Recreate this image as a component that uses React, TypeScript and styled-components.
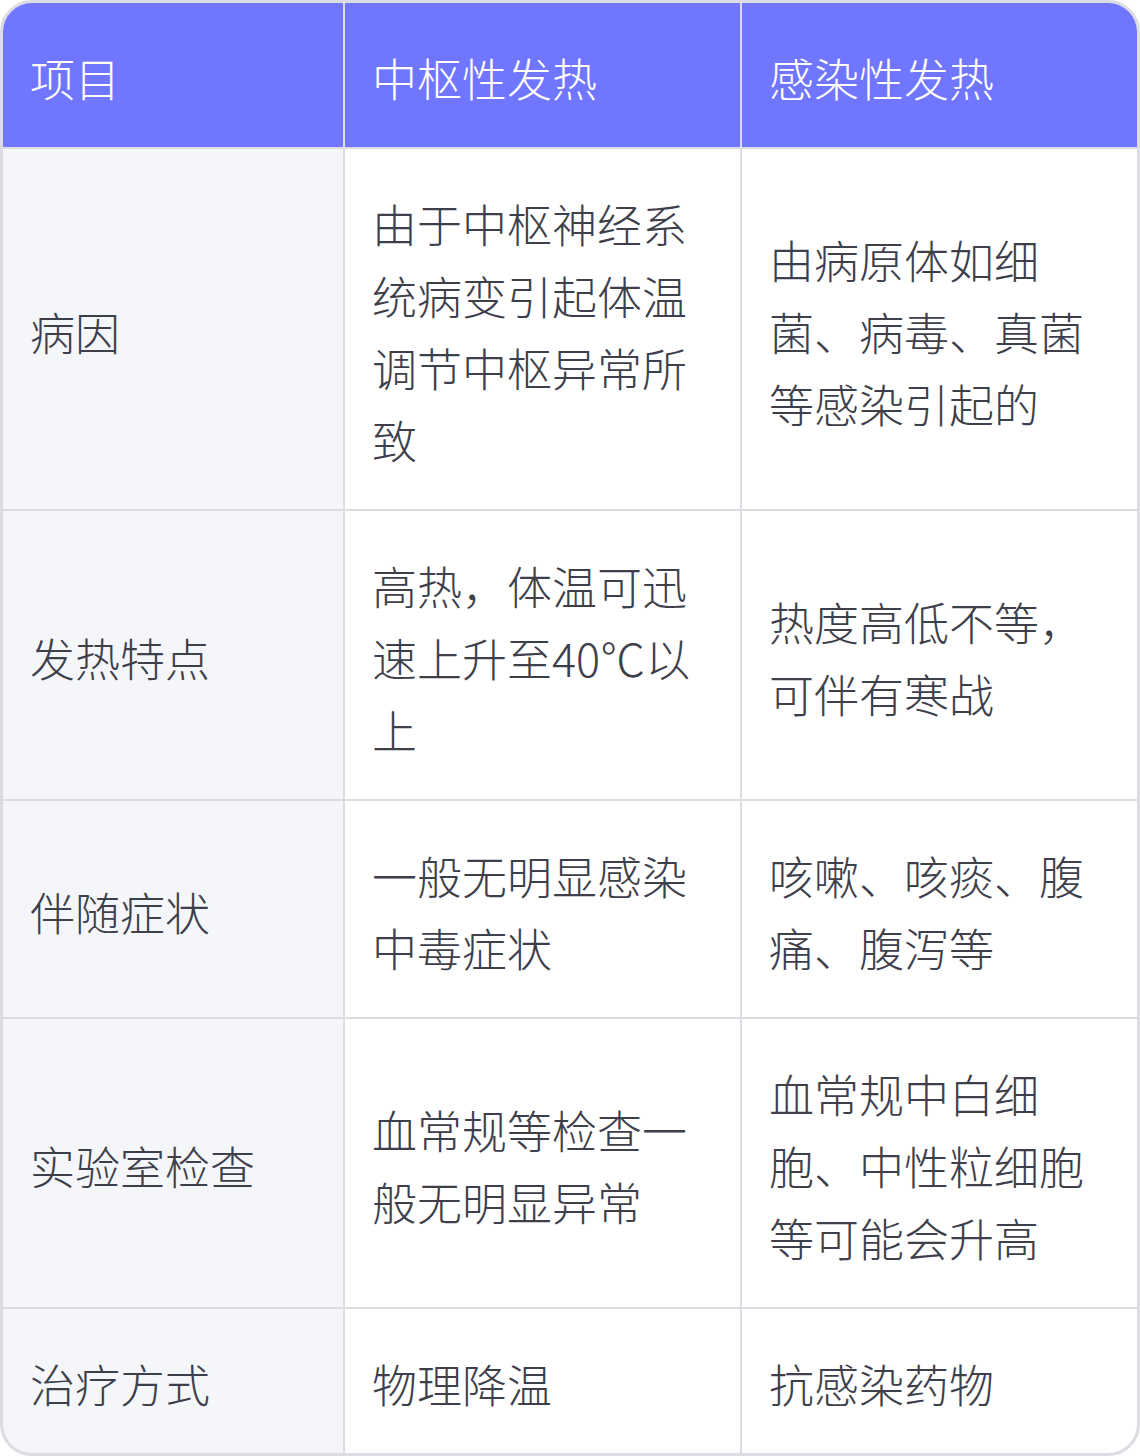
import React from "react";
import styled, { createGlobalStyle } from "styled-components";

const GlobalStyle = createGlobalStyle`
  html, body {
    margin: 0;
    padding: 0;
    background: #ffffff;
  }
  body {
    font-family: "Noto Sans CJK SC", "Noto Sans", sans-serif;
  }
`;

const TableFrame = styled.div`
  width: 1140px;
  box-sizing: border-box;
  border: 3px solid #dcdde3;
  border-radius: 32px;
  overflow: hidden;
  background: #dcdde3;
  display: grid;
  grid-template-columns: 340px 395px 395px;
  gap: 2px;
`;

const Cell = styled.div<{ $variant: "head" | "label" | "body" }>`
  box-sizing: border-box;
  padding: 39px 26px 33px 27px;
  display: flex;
  align-items: center;
  font-family: "Noto Sans CJK SC", "Noto Sans", sans-serif;
  font-size: 45px;
  line-height: 72px;
  font-weight: 300;
  word-break: break-all;
  color: ${(p) => (p.$variant === "head" ? "#ffffff" : "#3d404b")};
  background: ${(p) =>
    p.$variant === "head" ? "#7076ff" : p.$variant === "label" ? "#f5f6fa" : "#ffffff"};
`;

const header = ["项目", "中枢性发热", "感染性发热"];

const rows: [string, string, string][] = [
  ["病因", "由于中枢神经系统病变引起体温调节中枢异常所致", "由病原体如细菌、病毒、真菌等感染引起的"],
  ["发热特点", "高热，体温可迅速上升至40℃以上", "热度高低不等，可伴有寒战"],
  ["伴随症状", "一般无明显感染中毒症状", "咳嗽、咳痰、腹痛、腹泻等"],
  ["实验室检查", "血常规等检查一般无明显异常", "血常规中白细胞、中性粒细胞等可能会升高"],
  ["治疗方式", "物理降温", "抗感染药物"],
];

export default function App() {
  return (
    <>
      <GlobalStyle />
      <TableFrame>
        {header.map((h) => (
          <Cell key={h} $variant="head">
            {h}
          </Cell>
        ))}
        {rows.map((r) => (
          <React.Fragment key={r[0]}>
            <Cell $variant="label">{r[0]}</Cell>
            <Cell $variant="body">{r[1]}</Cell>
            <Cell $variant="body">{r[2]}</Cell>
          </React.Fragment>
        ))}
      </TableFrame>
    </>
  );
}
